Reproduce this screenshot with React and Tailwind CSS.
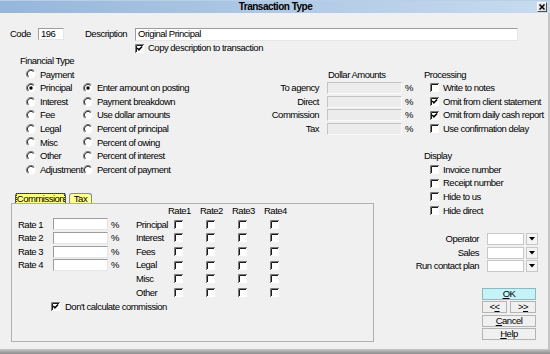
import React from 'react'

const ROW = 'h-[13.6px] flex items-center whitespace-nowrap'

/** Classic sunken 3D checkbox. */
function Check({ checked }) {
  return (
    <svg width="9" height="9" viewBox="0 0 9 9" className="shrink-0">
      <rect x="0" y="0" width="9" height="9" fill="#fff" />
      <path d="M0.5 9V0.5H9" stroke="#7a7a7a" fill="none" />
      <path d="M1.5 8V1.5H8" stroke="#1a1a1a" fill="none" />
      {checked && (
        <path d="M2.3 4.1l1.6 1.7 3.2-3.4" stroke="#000" strokeWidth="1.5" fill="none" />
      )}
    </svg>
  )
}

/** Classic sunken radio button. */
function Radio({ checked }) {
  return (
    <svg width="10" height="10" viewBox="0 0 10 10" className="shrink-0">
      <circle cx="5" cy="5" r="4.5" fill="#fff" />
      <path d="M8.3 1.7A4.6 4.6 0 0 0 1.7 8.3" stroke="#8a8a8a" fill="none" />
      <path d="M7.6 2.4A3.6 3.6 0 0 0 2.4 7.6" stroke="#1a1a1a" fill="none" />
      {checked && <circle cx="5" cy="5" r="1.7" fill="#000" />}
    </svg>
  )
}

const FIN_A = ['Payment', 'Principal', 'Interest', 'Fee', 'Legal', 'Misc', 'Other', 'Adjustment']
const FIN_B = [
  null,
  'Enter amount on posting',
  'Payment breakdown',
  'Use dollar amounts',
  'Percent of principal',
  'Percent of owing',
  'Percent of interest',
  'Percent of payment',
]
const DOLLARS = ['To agency', 'Direct', 'Commission', 'Tax']
const PROCESSING = [
  ['Write to notes', false],
  ['Omit from client statement', true],
  ['Omit from daily cash report', true],
  ['Use confirmation delay', false],
]
const DISPLAY = ['Invoice number', 'Receipt number', 'Hide to us', 'Hide direct']
const MATRIX = ['Principal', 'Interest', 'Fees', 'Legal', 'Misc', 'Other']
const COMBOS = ['Operator', 'Sales', 'Run contact plan']

function Field({ w }) {
  return (
    <div
      className={`h-[12px] ${w} bg-white border border-t-[#9c9c9c] border-l-[#9c9c9c] border-r-[#e6e6e6] border-b-[#e6e6e6]`}
    />
  )
}

function Btn({ children, ok }) {
  return (
    <div
      className={`h-[12px] flex items-center justify-center border ${
        ok ? 'bg-[#c4f4f8] border-[#8fb8c0]' : 'bg-[#f0f0f0] border-[#b4b4b4]'
      }`}
    >
      {children}
    </div>
  )
}

export default function App() {
  return (
    <div className="w-[550px] h-[354px] flex flex-col overflow-hidden bg-[#f0f0f0] text-black font-['Liberation_Sans',Arial,sans-serif] text-[9.5px] tracking-[-0.5px] leading-none">
      {/* title bar */}
      <div className="h-[13px] shrink-0 flex items-center bg-linear-to-r from-[#96b6da] to-[#c8dbef] border-t border-[#b8cfe8]">
        <div className="flex-1 text-center font-bold text-[10px] tracking-[-0.5px] pl-[14px]">
          Transaction Type
        </div>
        <div className="w-[10px] h-[10px] mr-[3px] flex items-center justify-center bg-[#e4e4e4] border border-t-white border-l-white border-r-[#505050] border-b-[#505050]">
          <svg width="6" height="6" viewBox="0 0 6 6">
            <path d="M0.5 0.5l5 5M5.5 0.5l-5 5" stroke="#000" strokeWidth="1.5" />
          </svg>
        </div>
      </div>

      <div className="flex-1 flex flex-col border-r-2 border-[#c4c4c4]">
        {/* code / description */}
        <div className="mt-[14px] h-[14px] flex items-center pl-[10px]">
          <span className="w-[28px]">Code</span>
          <div className="w-[26px] h-[12px] bg-white border border-t-[#9c9c9c] border-l-[#9c9c9c] border-r-[#e6e6e6] border-b-[#e6e6e6] pl-[2px] flex items-center">
            196
          </div>
          <span className="ml-[21px] w-[50px]">Description</span>
          <div className="w-[383px] h-[13px] bg-white border border-t-[#9c9c9c] border-l-[#9c9c9c] border-r-[#e6e6e6] border-b-[#e6e6e6] pl-[2px] flex items-center">
            Original Principal
          </div>
        </div>
        <div className="mt-[2px] h-[10px] flex items-center gap-[4px] pl-[135px]">
          <Check checked />
          <span>Copy description to transaction</span>
        </div>

        <div className="mt-[1px] flex">
          {/* left column */}
          <div className="w-[415px] flex flex-col">
            <div className="flex">
              {/* financial type */}
              <div className="w-[250px] flex flex-col">
                <div className={`${ROW} pl-[20px]`}>Financial Type</div>
                {FIN_A.map((a, i) => (
                  <div key={a} className={ROW}>
                    <div className="w-[83px] pl-[26px] flex items-center gap-[4px]">
                      <Radio checked={i === 1} />
                      <span>{a}</span>
                    </div>
                    {FIN_B[i] && (
                      <div className="flex items-center gap-[4px]">
                        <Radio checked={i === 1} />
                        <span>{FIN_B[i]}</span>
                      </div>
                    )}
                  </div>
                ))}
              </div>
              {/* dollar amounts */}
              <div className="flex flex-col pt-[13.6px]">
                <div className={`${ROW} pl-[78px]`}>Dollar Amounts</div>
                {DOLLARS.map((d) => (
                  <div key={d} className={ROW}>
                    <span className="w-[69px] text-right">{d}</span>
                    <div className="ml-[8px] w-[75px] h-[12px] bg-[#ececec] border border-t-[#c4c4c4] border-l-[#c4c4c4] border-r-[#fafafa] border-b-[#fafafa]" />
                    <span className="ml-[3px]">%</span>
                  </div>
                ))}
              </div>
            </div>

            {/* tabs */}
            <div className="mt-[16.6px] h-[10px] flex items-end gap-[3px] pl-[15px]">
              <div className="w-[51px] h-[10px] bg-[#ffff80] border border-b-0 border-[#505050] rounded-t-[3px] flex items-center justify-center">
                <span className="outline outline-1 outline-dotted outline-[#303030]">Commission</span>
              </div>
              <div className="w-[23px] h-[10px] bg-[#ffff9c] border border-b-0 border-[#8a8a8a] rounded-t-[3px] flex items-center justify-center">
                Tax
              </div>
            </div>
            <div className="ml-[11px] w-[363px] h-[139px] border border-[#b0b0b0] flex flex-col">
              <div className="flex">
                <div className="w-[124px] flex flex-col pt-[13.6px]">
                  {[1, 2, 3, 4].map((n) => (
                    <div key={n} className={`${ROW} pl-[6px]`}>
                      <span className="w-[35px]">Rate {n}</span>
                      <Field w="w-[55px]" />
                      <span className="ml-[3px]">%</span>
                    </div>
                  ))}
                </div>
                <div className="flex flex-col">
                  <div className={ROW}>
                    <span className="w-[32px]" />
                    {[1, 2, 3, 4].map((n) => (
                      <span key={n} className="w-[32px]">
                        Rate{n}
                      </span>
                    ))}
                  </div>
                  {MATRIX.map((m) => (
                    <div key={m} className={ROW}>
                      <span className="w-[38px]">{m}</span>
                      {[1, 2, 3, 4].map((n) => (
                        <span key={n} className="w-[32px] flex">
                          <Check />
                        </span>
                      ))}
                    </div>
                  ))}
                </div>
              </div>
              <div className="mt-[2.6px] h-[10px] flex items-center gap-[5px] pl-[39px]">
                <Check checked />
                <span>Don&apos;t calculate commission</span>
              </div>
            </div>
          </div>

          {/* right column */}
          <div className="flex-1 flex flex-col pt-[13.6px]">
            <div className={`${ROW} pl-[9px]`}>Processing</div>
            {PROCESSING.map(([p, c]) => (
              <div key={p} className={`${ROW} pl-[15px] gap-[4px]`}>
                <Check checked={c} />
                <span>{p}</span>
              </div>
            ))}
            <div className={ROW} />
            <div className={`${ROW} pl-[9px]`}>Display</div>
            {DISPLAY.map((d) => (
              <div key={d} className={`${ROW} pl-[15px] gap-[4px]`}>
                <Check />
                <span>{d}</span>
              </div>
            ))}

            <div className="mt-[15px] flex flex-col">
              {COMBOS.map((c) => (
                <div key={c} className={ROW}>
                  <div className="w-[64px] flex justify-end">
                    <span className="shrink-0">{c}</span>
                  </div>
                  <div className="ml-[8px] w-[37px] h-[12px] bg-white border border-[#c8c8c8]" />
                  <div className="ml-[2px] w-[12px] h-[12px] bg-[#f4f4f4] border border-[#c8c8c8] flex items-center justify-center">
                    <svg width="6" height="4" viewBox="0 0 6 4">
                      <path d="M0 0h6L3 3.5z" fill="#000" />
                    </svg>
                  </div>
                </div>
              ))}
            </div>

            <div className="mt-[15px] ml-[67px] w-[54px] flex flex-col gap-[1.3px]">
              <Btn ok>
                <span>
                  <u>O</u>K
                </span>
              </Btn>
              <div className="flex justify-between">
                <div className="w-[25px]">
                  <Btn>
                    <span>
                      &lt;<u>&lt;</u>
                    </span>
                  </Btn>
                </div>
                <div className="w-[26px]">
                  <Btn>
                    <span>
                      &gt;<u>&gt;</u>
                    </span>
                  </Btn>
                </div>
              </div>
              <Btn>
                <span>
                  <u>C</u>ancel
                </span>
              </Btn>
              <Btn>
                <span>
                  <u>H</u>elp
                </span>
              </Btn>
            </div>
          </div>
        </div>
      </div>

      {/* bottom frame */}
      <div className="h-[5px] shrink-0 bg-linear-to-b from-[#c8c8c8] to-[#8c8c8c]" />
    </div>
  )
}
